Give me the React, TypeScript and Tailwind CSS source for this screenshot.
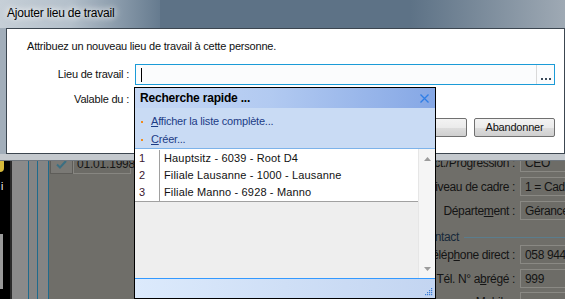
import React from "react"

const font = "font-['Liberation_Sans',Arial,sans-serif]"

function Field({ label, value }: { label: React.ReactNode; value: string }) {
  return (
    <div className="flex items-center h-[19px] shrink-0">
      <span className="w-[135px] shrink-0 text-right text-[#141414] whitespace-nowrap">{label}</span>
      <div className="ml-[5px] w-[110px] h-[19px] shrink-0 border border-[#8a8984] bg-[#6d6c67] flex items-center pl-[4px] text-[#141414] whitespace-nowrap">
        {value}
      </div>
    </div>
  )
}

function Background() {
  return (
    <div className="flex h-full w-full">
      {/* left task strip */}
      <div className="w-[10px] bg-black flex flex-col pt-[158px] gap-[10px] shrink-0">
        <div className="w-[4px] h-[14px] bg-[#d6b93a] rounded-r-sm" />
        <span className="text-white text-[10px] leading-none pl-[1px]">i</span>
        <div className="mt-[32px] w-[3px] h-[55px] bg-[#9a9a9a]" />
      </div>
      <div className="w-[2px] bg-[#2b2b2b] shrink-0" />
      <div className="w-[16px] bg-[#8a8a8a] shrink-0" />
      <div className="w-px bg-[#1f6a8c] shrink-0" />
      <div className="w-[8px] bg-[#848484] shrink-0" />
      <div className="w-px bg-[#1f6a8c] shrink-0" />
      <div className="w-[10px] bg-[#848484] shrink-0" />
      <div className="w-px bg-[#1f6a8c] shrink-0" />

      <div className="flex-1 flex bg-[#6f6e69]">
        <div className="pt-[154px] pl-px flex h-fit">
          <div className="w-[23px] h-[20px] bg-[#7a7975] border border-[#5e5d59] flex items-center justify-center">
            <svg width="11" height="9" viewBox="0 0 11 9">
              <path d="M1 4.5 L4 7.5 L10 1" stroke="#3b6f82" strokeWidth="2" fill="none" />
            </svg>
          </div>
          <div className="w-[58px] h-[20px] bg-[#6c6b66] border border-[#878681] flex items-center pl-[3px] text-[#161616] text-[12px]">
            01.01.1998
          </div>
        </div>

        <div className="ml-auto w-[185px] shrink-0 flex flex-col pt-[153px] text-[12px] tracking-[-0.35px]">
          <Field label={<>Fonct./Pro<u>g</u>ression :</>} value="CEO" />
          <div className="mt-[5px]"><Field label="Niveau de cadre :" value="1 = Cadre" /></div>
          <div className="mt-[5px]"><Field label={<>Départe<u>m</u>ent :</>} value="Gérance" /></div>
          <div className="mt-[10px] h-[14px] flex items-center pl-[40px]">
            <span className="text-[#17293a]">Contact</span>
            <div className="ml-[5px] flex-1 h-px bg-[#5a7d8e]" />
          </div>
          <div className="mt-px"><Field label={<>Télép<u>h</u>one direct :</>} value="058 944" /></div>
          <div className="mt-[5px]"><Field label={<>Tél. N° a<u>b</u>régé :</>} value="999" /></div>
          <div className="mt-[4px]"><Field label="Mobile :" value="" /></div>
        </div>
      </div>
    </div>
  )
}

function Button({ children }: { children?: React.ReactNode }) {
  return (
    <button className="w-[81px] h-[19px] rounded-[2px] border border-[#707070] bg-[linear-gradient(#f3f3f3_0%,#ebebeb_50%,#dddddd_51%,#cfcfcf_100%)] flex items-center justify-center text-[#111]">
      {children}
    </button>
  )
}

function Dialog() {
  return (
    <div className="absolute left-0 top-0 w-[575px] h-[161px] flex flex-col bg-[#a2aeba]">
      {/* glass title bar */}
      <div className="relative h-[28px] shrink-0 flex items-center pl-[7px] pb-[2px]">
        <div className="absolute inset-0 flex">
          <div className="w-[70px] bg-gradient-to-r from-[#c6cfd7] to-[#b4c0cb]" />
          <div className="w-[90px] bg-gradient-to-r from-[#b4c0cb] to-[#667b8f]" />
          <div className="w-[250px] bg-[#5d7286]" />
          <div className="flex-1 bg-gradient-to-r from-[#5d7286] to-[#a3adb7]" />
        </div>
        <span className="relative text-[12px] text-black [text-shadow:0_0_6px_#ffffff,0_0_10px_#ffffff]">Ajouter lieu de travail</span>
      </div>
      <div className="ml-[6px] w-[559px] h-[126px] border border-[#3c4650] bg-white flex flex-col">
        <div className="pl-[20px] pt-[9px] h-[16px] box-content leading-[16px] text-[#111]">
          Attribuez un nouveau lieu de travail à cette personne.
        </div>
        <div className="mt-[10px] flex items-center h-[21px]">
          <span className="w-[122px] text-right text-[#111]">Lieu de travail :</span>
          <div className="ml-[6px] w-[420px] h-[21px] border border-[#1b9bd7] bg-[#fbfcfd] flex">
            <div className="flex-1 flex items-center pl-[5px]">
              <div className="w-px h-[14px] bg-black" />
            </div>
            <div className="w-[18px] border-l border-[#d9d9d9] flex items-end justify-center pb-[4px] gap-[2px]">
              <div className="w-[2px] h-[2px] bg-[#3a4a5a]" />
              <div className="w-[2px] h-[2px] bg-[#3a4a5a]" />
              <div className="w-[2px] h-[2px] bg-[#3a4a5a]" />
            </div>
          </div>
        </div>
        <div className="mt-[4px] flex items-center h-[21px]">
          <span className="w-[122px] text-right text-[#111]">Valable du :</span>
        </div>
        <div className="mt-[8px] flex justify-end gap-[7px] pr-[9px]">
          <Button>OK</Button>
          <Button>Abandonner</Button>
        </div>
      </div>
      <div className="flex-1 bg-[#c4c9ce] border-b border-[#6f767d]" />
    </div>
  )
}

function Popup() {
  const rows = [
    ["1", "Hauptsitz - 6039 - Root D4"],
    ["2", "Filiale Lausanne - 1000 - Lausanne"],
    ["3", "Filiale Manno - 6928 - Manno"],
  ]
  return (
    <div className="absolute left-[134px] top-[87px] w-[302px] h-[212px] border border-black flex flex-col bg-white">
      <div className="h-[20px] shrink-0 flex items-center justify-between pl-[5px] pr-[6px] bg-[linear-gradient(90deg,#c6d8f5_0%,#b2caf1_45%,#85a7e5_100%)]">
        <span className="font-bold text-[12px] text-black">Recherche rapide ...</span>
        <svg width="9" height="9" viewBox="0 0 9 9">
          <path d="M0.5 0.5 L8.5 8.5 M8.5 0.5 L0.5 8.5" stroke="#2f7ee6" strokeWidth="1.3" />
        </svg>
      </div>
      <div className="h-[40px] shrink-0 bg-[#c9dbf4] flex flex-col pl-[6px] pt-[5px]">
        <div className="flex items-center h-[17px]">
          <div className="w-[2px] h-[2px] bg-[#f08c1e]" />
          <span className="ml-[8px] text-[#1c3b86]"><u>A</u>fficher la liste complète...</span>
        </div>
        <div className="flex items-center h-[17px] mt-px">
          <div className="w-[2px] h-[2px] bg-[#f08c1e]" />
          <span className="ml-[8px] text-[#1c3b86]"><u>C</u>réer...</span>
        </div>
      </div>
      <div className="h-px shrink-0 bg-[#7db3ea]" />
      <div className="h-[129px] shrink-0 flex">
        <div className="w-[283px] flex flex-col bg-[#eeeeee]">
          <div className="bg-white pt-px border-b border-[#a0a0a0] tracking-[0.15px]">
            {rows.map(([n, t]) => (
              <div key={n} className="flex h-[17px]">
                <div className="w-[25px] pl-[4px] border-r border-[#a0a0a0] flex items-center text-[#3a1630]">{n}</div>
                <div className="pl-[4px] flex items-center text-[#111] whitespace-nowrap">{t}</div>
              </div>
            ))}
          </div>
        </div>
        <div className="flex-1 bg-[#f5f5f5] border-l border-[#e6e6e6] flex flex-col items-center justify-between pt-[8px] pb-[7px]">
          <svg width="7" height="4" viewBox="0 0 7 4"><path d="M0 4 L3.5 0 L7 4 Z" fill="#9c9c9c" /></svg>
          <svg width="7" height="4" viewBox="0 0 7 4"><path d="M0 0 L3.5 4 L7 0 Z" fill="#9c9c9c" /></svg>
        </div>
      </div>
      <div className="h-px shrink-0 bg-[#3399ff]" />
      <div className="flex-1 flex items-end justify-end pr-[2px] pb-[2px] bg-[linear-gradient(90deg,#dceafc_0%,#cfdff6_50%,#c3d5f1_100%)]">
        <svg width="9" height="9" viewBox="0 0 9 9">
          {[[7, 1], [5, 3], [7, 3], [3, 5], [5, 5], [7, 5], [1, 7], [3, 7], [5, 7], [7, 7]].map(([x, y], i) => (
            <rect key={i} x={x} y={y} width="1.2" height="1.2" fill="#3f7fd8" />
          ))}
        </svg>
      </div>
    </div>
  )
}

export default function App() {
  return (
    <div className={`relative w-[565px] h-[299px] overflow-hidden text-[11px] tracking-[-0.2px] ${font}`}>
      <Background />
      <Dialog />
      <Popup />
    </div>
  )
}
